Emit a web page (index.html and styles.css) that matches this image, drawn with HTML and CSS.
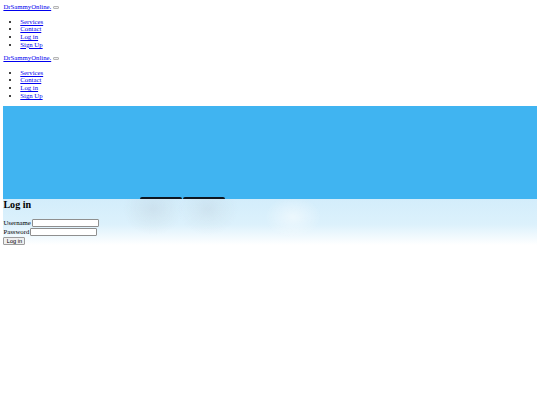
FILE: index.html
```html
<!DOCTYPE html>
<html>
<head>
<meta charset="utf-8">
<title>DrSammyOnline</title>
<link rel="stylesheet" href="styles.css">
</head>
<body>
<nav class="nav">
  <div class="brandline"><a href="#" class="brand">DrSammyOnline.</a> <button class="toggler" type="button"></button></div>
  <ul class="menu">
    <li><a href="#">Services</a></li>
    <li><a href="#">Contact</a></li>
    <li><a href="#">Log in</a></li>
    <li><a href="#">Sign Up</a></li>
  </ul>
</nav>
<nav class="nav">
  <div class="brandline"><a href="#" class="brand">DrSammyOnline.</a> <button class="toggler" type="button"></button></div>
  <ul class="menu">
    <li><a href="#">Services</a></li>
    <li><a href="#">Contact</a></li>
    <li><a href="#">Log in</a></li>
    <li><a href="#">Sign Up</a></li>
  </ul>
</nav>
<div class="hero">
  <div class="taskbar"><span class="seg"></span><span class="seg"></span></div>
</div>
<section class="login">
  <h2 class="title">Log in</h2>
  <form class="form">
    <div class="row"><label class="lbl">Username</label> <input class="field" type="text"></div>
    <div class="row"><label class="lbl">Password</label> <input class="field" type="password"></div>
    <button class="submit" type="button">Log in</button>
  </form>
</section>
</body>
</html>
```
FILE: styles.css
```css
body {
  margin: 3.4px;
  font-family: "Liberation Serif", "Times New Roman", serif;
  font-size: 6.75px;
  line-height: 7.76px;
  background: #fff;
  color: #000;
}
a {
  color: #0000ee;
}
.nav {
  display: block;
}
.brandline {
  height: 7.76px;
  display: flex;
  align-items: center;
  gap: 1.5px;
}
.toggler {
  display: block;
  width: 6px;
  height: 3px;
  padding: 0;
  margin: 1px 0 0;
  border: 1px solid #b5b5b5;
  border-radius: 1px;
  background: #efefef;
}
.menu {
  margin: 6.5px 0 5.75px;
  padding-left: 16.9px;
}
.hero {
  position: relative;
  height: 93px;
  background: #40b4f1;
}
.taskbar {
  position: absolute;
  left: 137px;
  bottom: -0.5px;
  display: flex;
  gap: 1px;
}
.seg {
  width: 42px;
  height: 2.5px;
  background: #0d1620;
  border-radius: 2px 2px 0 0;
}
.login {
  background:
    radial-gradient(ellipse 30px 26px at 150px 10px, rgba(170,180,190,0.22), rgba(170,180,190,0.1) 50%, rgba(170,180,190,0) 100%),
    radial-gradient(ellipse 30px 26px at 205px 10px, rgba(170,180,190,0.2), rgba(170,180,190,0.08) 50%, rgba(170,180,190,0) 100%),
    radial-gradient(ellipse 28px 20px at 290px 18px, rgba(255,255,255,0.5), rgba(255,255,255,0) 100%),
    linear-gradient(to bottom, #d3edfb 0%, #dcf1fc 55%, #ffffff 100%);
}
.title {
  margin: 0 0 8.4px;
  font-size: 10.1px;
  line-height: 11.8px;
  font-weight: bold;
}
.form {
  margin: 0;
}
.row {
  height: 8.8px;
  display: flex;
  align-items: center;
  gap: 1px;
}
.field {
  box-sizing: border-box;
  width: 67px;
  height: 8px;
  padding: 0;
  margin: 0;
  border: 1px solid #8f8f8f;
  border-radius: 1px;
  background: #fff;
}
.submit {
  box-sizing: border-box;
  width: 22px;
  height: 8px;
  padding: 0;
  margin: 0.5px 0 0;
  font-family: "Liberation Sans", Arial, sans-serif;
  font-size: 5.6px;
  line-height: 6px;
  border: 1px solid #9c9c9c;
  border-radius: 1px;
  background: #efefef;
  color: #000;
}
```
